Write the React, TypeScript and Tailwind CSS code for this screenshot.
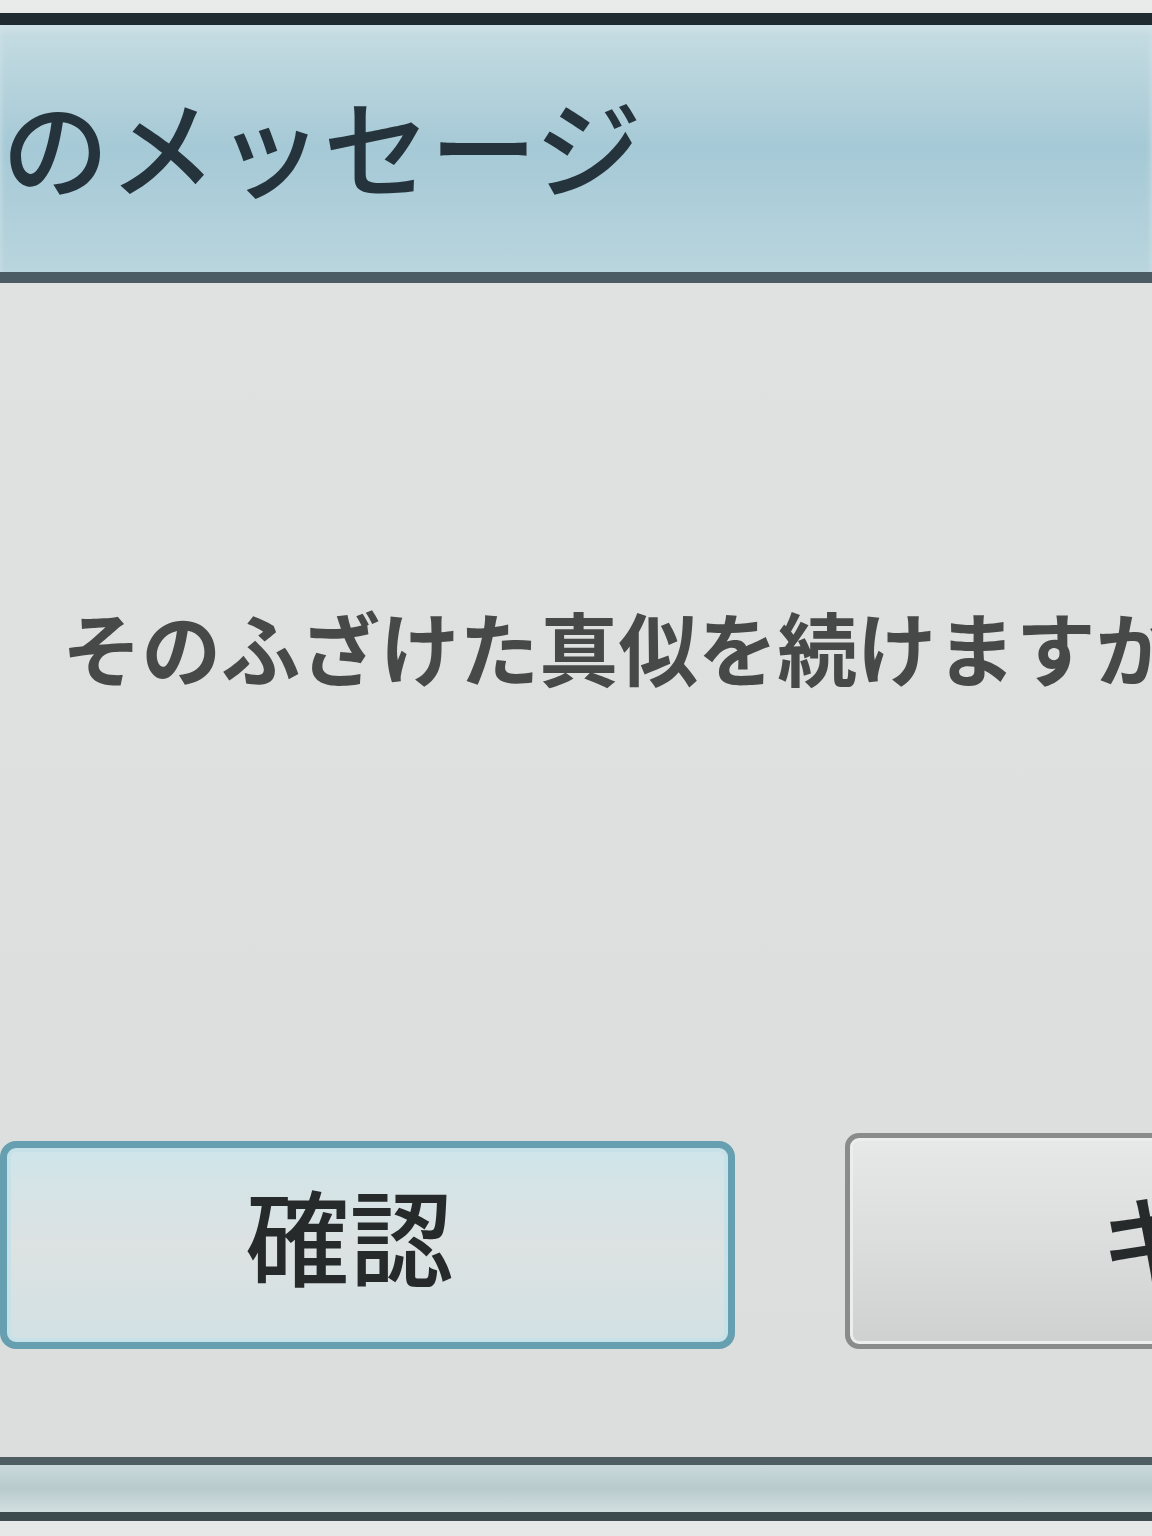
const font = "font-['Noto_Sans_CJK_JP','Noto_Sans_CJK_SC',sans-serif]";

const App = () => {
    return (
        <div className={`w-[1152px] h-[1536px] overflow-hidden flex flex-col bg-[#e7e9e9] ${font}`}>
            {/* top edge */}
            <div className="h-[13px] bg-[#e9ebeb]" />
            <div className="h-[12px] bg-[#1f2b31]" />

            {/* title bar */}
            <div className="h-[247px] flex items-center pb-[10px] bg-linear-to-b from-[#c6dce2] via-[#a5c9d6] to-[#b9d5de] shadow-[inset_0_6px_6px_#cfe2e7]">
                <span className="pl-[2px] text-[107px] leading-none font-medium text-[#25343c] whitespace-nowrap">
                    のメッセージ
                </span>
            </div>
            <div className="h-[11px] bg-[#4b5c64]" />

            {/* body */}
            <div className="flex-1 flex flex-col bg-linear-to-b from-[#e0e2e1] to-[#dcdedd] overflow-hidden">
                <div className="pt-[323px] pl-[62px] text-[79.5px] leading-none font-semibold text-[#474949] whitespace-nowrap">
                    そのふざけた真似を続けますか？
                </div>

                <div className="mt-[455px] flex gap-[110px] h-[208px]">
                    <div className="w-[735px] shrink-0 rounded-[16px] border-[7px] border-[#659fb0] bg-linear-to-b from-[#cfe5ea] via-[#dde2e2] to-[#d2e1e4] shadow-[inset_0_0_0_4px_#c6e1e8] flex items-center justify-center pr-[36px] pb-[22px]">
                        <span className="text-[104px] leading-none font-medium text-[#262a2b]">確認</span>
                    </div>
                    <div className="w-[1010px] shrink-0 -mt-[8px] rounded-[14px] border-[5px] border-[#8a8b8b] bg-linear-to-b from-[#e7e8e8] via-[#dcdddd] to-[#cfd0d0] shadow-[inset_0_0_0_3px_#eceded] flex items-center justify-center pb-[10px]">
                        <span className="text-[100px] leading-none font-medium text-[#262a2b] whitespace-nowrap">キャンセル</span>
                    </div>
                </div>
            </div>

            {/* bottom bar */}
            <div className="h-[8px] bg-[#4e5e62]" />
            <div className="h-[47px] bg-linear-to-b from-[#c9d9dc] via-[#b9cacd] to-[#d2dfe1]" />
            <div className="h-[9px] bg-[#3d4b4f]" />
            <div className="h-[15px] bg-[#e6e8e8]" />
        </div>
    )
}

export default App;
